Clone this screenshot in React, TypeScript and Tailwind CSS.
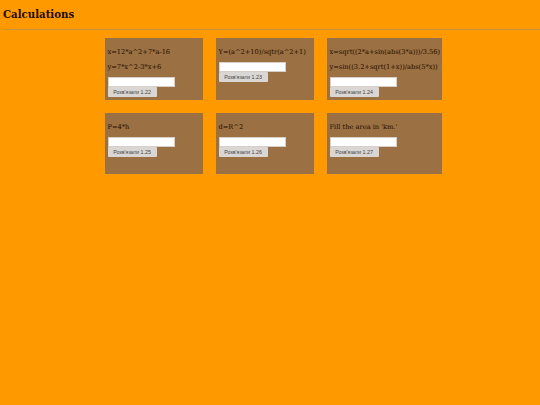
const cards = [
  [
    { lines: ["x=12*a^2+7*a-16", "y=7*x^2-3*x+6"], label: "Розв'язати 1.22", width: "w-[98px]" },
    { lines: ["Y=(a^2+10)/sqtr(a^2+1)"], label: "Розв'язати 1.23", width: "w-[98px]" },
    { lines: ["x=sqrt((2*a+sin(abs(3*a)))/3.56)", "y=sin((3.2+sqrt(1+x))/abs(5*x))"], label: "Розв'язати 1.24", width: "w-[115px]" },
  ],
  [
    { lines: ["P=4*h"], label: "Розв'язати 1.25", width: "w-[98px]" },
    { lines: ["d=R^2"], label: "Розв'язати 1.26", width: "w-[98px]" },
    { lines: ["Fill the area in 'km.'"], label: "Розв'язати 1.27", width: "w-[115px]" },
  ],
];

function Card({ lines, label, width }: { lines: string[]; label: string; width: string }) {
  return (
    <div className={`${width} bg-[#9b7042] pl-[2.5px] pt-[8.5px]`}>
      {lines.map((line) => (
        <p key={line} className="mb-[5px] h-[10px] whitespace-nowrap text-[6.65px] leading-[10px] text-[#1f0d00]">
          {line}
        </p>
      ))}
      <div className="mt-[0.5px] h-[10px] w-[67px] border border-[#d8d0c8] bg-white" />
      <button className="block h-[10px] w-[49px] rounded-[1px] bg-[#d9d6d3] text-center font-['Liberation_Sans',sans-serif] text-[5.3px] leading-[10px] text-[#444]">
        {label}
      </button>
    </div>
  );
}

export default function App() {
  return (
    <div className="min-h-[405px] bg-[#ff9900] font-['DejaVu_Serif',serif]">
      <div className="px-[3px] pt-[8px]">
        <h1 className="text-[10.2px] leading-[13px] font-bold text-[#1f0d00]">Calculations</h1>
      </div>
      <div className="mt-[8px] ml-[4px] h-px bg-[#c8913f]" />
      <div className="mt-[8px] ml-[105px] flex flex-col gap-[13px]">
        {cards.map((row, i) => (
          <div key={i} className={i === 0 ? "flex h-[62px] gap-[13px]" : "flex h-[61px] gap-[13px]"}>
            {row.map((card) => (
              <Card key={card.label} {...card} />
            ))}
          </div>
        ))}
      </div>
    </div>
  );
}
